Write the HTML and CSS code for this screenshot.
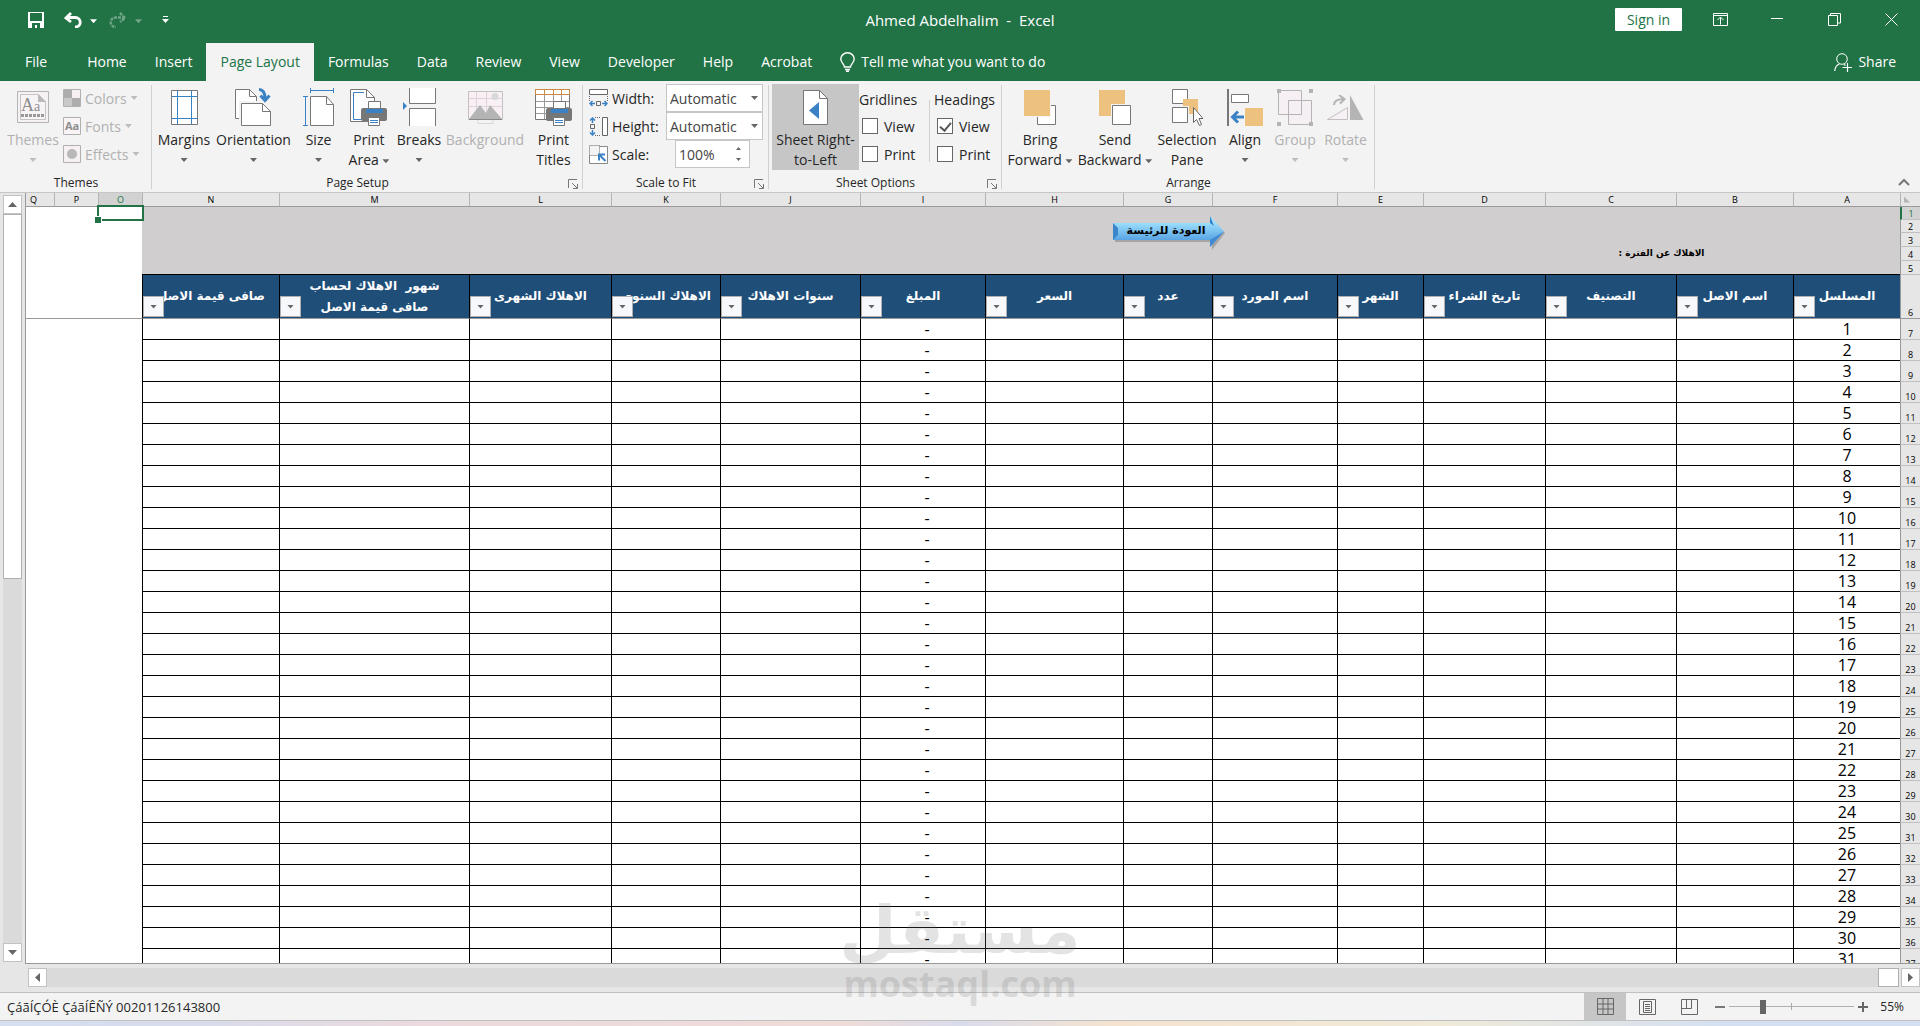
FILE: index.html
```html
<!DOCTYPE html>
<html lang="en">
<head>
    <meta charset="UTF-8">
    <meta name="viewport" content="width=device-width, initial-scale=1.0">
    <title>Ahmed Abdelhalim - Excel</title>
    <link rel="stylesheet" href="styles.css">
</head>
<body>
    <header class="titlebar">
        <div class="quick-access">
            <button class="icon-btn save" aria-label="Save"><svg width="16" height="16" viewBox="0 0 16 16"><path d="M0 0h16v16H0z" fill="#fff"/><path d="M2 1h12v8H2zM4 11h8v5H9v-3H7v3H4z" fill="#217346"/></svg></button>
            <button class="icon-btn" aria-label="Undo"><svg width="18" height="16" viewBox="0 0 18 16"><path d="M7 1L2 6l5 4M2 5.500h9c7 0 7 9.500 0 9.500" fill="none" stroke="#fff" stroke-width="2.800"/></svg></button>
            <button class="icon-btn" aria-label="Undo list"><span class="caret white"></span></button>
            <button class="icon-btn faded redo" aria-label="Redo"><svg width="18" height="16" viewBox="0 0 18 16"><path d="M11 1l5 5-5 4M16 5.500H7c-7 0-7 9.500 0 9.500" fill="none" stroke="#fff" stroke-width="2.500" stroke-dasharray="3 1"/></svg></button>
            <button class="icon-btn faded" aria-label="Redo list"><span class="caret white"></span></button>
            <button class="icon-btn customize" aria-label="Customize toolbar"><svg width="7" height="8" viewBox="0 0 7 8"><path d="M1 0h5v1H1zM0 3h7L3.500 7z" fill="#fff"/></svg></button>
        </div>
        <h1>Ahmed Abdelhalim&nbsp; -&nbsp; Excel</h1>
        <div class="window-controls">
            <button class="sign-in">Sign in</button>
            <button class="win-btn" aria-label="Ribbon display options"><svg width="15" height="13" viewBox="0 0 15 13"><path d="M.5.5h14v12H.5zM.5 2.500h14M7.500 11.500v-7M4.500 7l3-3 3 3" fill="none" stroke="#fff"/></svg></button>
            <button class="win-btn" aria-label="Minimize"><svg width="13" height="13" viewBox="0 0 13 13"><path d="M0 5.500h12" stroke="#fff"/></svg></button>
            <button class="win-btn" aria-label="Restore"><svg width="13" height="13" viewBox="0 0 13 13"><path d="M.5 2.500h9v10h-9zM2.500 2.500v-2h10v9.500h-3" fill="none" stroke="#fff"/></svg></button>
            <button class="win-btn" aria-label="Close"><svg width="13" height="13" viewBox="0 0 13 13"><path d="M.5.5l12 12M12.500.5l-12 12" stroke="#fff"/></svg></button>
        </div>
    </header>

    <nav class="tabs">
        <a href="#" class="file">File</a>
        <a href="#">Home</a>
        <a href="#">Insert</a>
        <a href="#" class="active">Page Layout</a>
        <a href="#">Formulas</a>
        <a href="#">Data</a>
        <a href="#">Review</a>
        <a href="#">View</a>
        <a href="#">Developer</a>
        <a href="#">Help</a>
        <a href="#">Acrobat</a>
        <a href="#" class="tell-me"><svg width="15" height="20" viewBox="0 0 15 20"><path d="M4.500 15c0-3-3.700-4-3.700-8a6.700 6.200 0 0 1 13.400 0c0 4-3.700 5-3.700 8zM5 17.500h5M6 19.300h3" fill="none" stroke="#fff" stroke-width="1.400"/></svg>Tell me what you want to do</a>
        <a href="#" class="share"><svg width="18" height="19" viewBox="0 0 18 19"><circle cx="8" cy="6" r="5.300" fill="none" stroke="#fff"/><path d="M.7 18c.3-4 2-6 4.800-7M10 11.500l1.500 1M8.500 14.500H18M13.500 10v9" fill="none" stroke="#fff" stroke-width="1.200"/></svg>Share</a>
    </nav>

    <section class="ribbon">
        <div class="group themes">
            <div class="group-body">
                <button class="big" disabled>
                    <span class="pic"><svg width="32" height="32" viewBox="0 0 32 32"><path d="M.5.5h31v31H.5z" fill="#f6f2f4" stroke="#b4b4b4"/><path d="M3.500 3.500h18l7 7v18h-25z" fill="#f8f4f6" stroke="#c4c4c4"/><path d="M21 3l8 8h-8z" fill="#bbb"/><text x="4" y="20" font-family="Liberation Serif" font-size="18" fill="#8d8d8d">A</text><text x="17" y="20" font-family="Liberation Serif" font-size="14" fill="#8d8d8d">a</text><path d="M4 24.500h23" stroke="#999" stroke-width="3" stroke-dasharray="3 1"/></svg></span>
                    <span>Themes</span><span class="caret"></span>
                </button>
                <div class="stack">
                    <button class="small" disabled><svg width="18" height="18" viewBox="0 0 18 18"><path d="M.5.5h17v17H.5z" fill="#f6f0f3" stroke="#b0b0b0"/><path d="M1 1h8v8H1zM9 9h8v8H9z" fill="#adadad"/><path d="M1 9h8v8H1z" fill="#c9c9c9"/></svg>Colors<span class="caret"></span></button>
                    <button class="small" disabled><svg width="18" height="18" viewBox="0 0 18 18"><path d="M.5.5h17v17H.5z" fill="#f8f4f6" stroke="#b0b0b0"/><text x="2" y="13" font-family="Open Sans" font-weight="700" font-size="11" fill="#8d8d8d">Aa</text></svg>Fonts<span class="caret"></span></button>
                    <button class="small" disabled><svg width="18" height="18" viewBox="0 0 18 18"><path d="M.5.5h17v17H.5z" fill="#f6f0f3" stroke="#b0b0b0"/><circle cx="9" cy="9" r="5" fill="#b8b8b8"/></svg>Effects<span class="caret"></span></button>
                </div>
            </div>
            <h2>Themes</h2>
        </div>

        <div class="group setup">
            <div class="group-body">
                <button class="big"><span class="pic"><svg width="27" height="35" viewBox="0 0 27 35"><path d="M.5.5h26v34H.5z" fill="#fff" stroke="#777"/><path d="M6.500 1v33M20.500 1v33M1 6.500h25M1 28.500h25" stroke="#3b82c4"/></svg></span><span>Margins</span><span class="caret"></span></button>
                <button class="big"><span class="pic"><svg width="37" height="38" viewBox="0 0 37 38"><path d="M.5 1.500h14l7 7v22H.5z" fill="#fff" stroke="#777"/><path d="M14.500 1.500v7h7" fill="none" stroke="#777"/><path d="M4 13h29v25H4z" fill="#f3f3f3"/><path d="M6.500 15.500h21l8 8v14h-29z" fill="#fff" stroke="#777"/><path d="M27.500 15.500v8h8" fill="none" stroke="#777"/><path d="M24 1.500c4 0 6 3 6 9M25.500 7.500l4.500 5 4.500-5" fill="none" stroke="#3b82c4" stroke-width="3"/></svg></span><span>Orientation</span><span class="caret"></span></button>
                <button class="big"><span class="pic"><svg width="32" height="38" viewBox="0 0 32 38"><path d="M7.500 8.500h16l7 8v21h-23z" fill="#fff" stroke="#777"/><path d="M23.500 8.500v8h7" fill="none" stroke="#777"/><path d="M8 2.500h22M7.500 0v5M30.500 0v5M2.500 8v29M0 8.500h5M0 37.500h5" stroke="#3b82c4"/></svg></span><span>Size</span><span class="caret"></span></button>
                <button class="big"><span class="pic"><svg width="38" height="38" viewBox="0 0 38 38"><path d="M.5 1.500h16l8 8v24H.5z" fill="#fff" stroke="#777"/><path d="M16.500 1.500v8h8" fill="none" stroke="#777"/><path d="M14 4.500H3.500v27H12" fill="none" stroke="#3b82c4"/><path d="M18.500 13.500h12v9h-12z" fill="#fff" stroke="#777"/><path d="M11 22q0-2 2-2h22q2 0 2 2v9q0 2-2 2H13q-2 0-2-2z" fill="#777"/><path d="M16 21h17v4H16z" fill="#3b82c4"/><path d="M18.500 29.500h11v8h-11z" fill="#fff" stroke="#777"/><path d="M20 32.500h8M20 34.500h8" stroke="#3b82c4"/></svg></span><span>Print</span><span>Area <i class="caret"></i></span></button>
                <button class="big"><span class="pic"><svg width="33" height="38" viewBox="0 0 33 38"><path d="M6.500 0v15.500h26V0M6.500 38V20.500h26V38" fill="#fff" stroke="#777"/><path d="M0 14l4 4-4 4z" fill="#3b82c4"/></svg></span><span>Breaks</span><span class="caret"></span></button>
                <button class="big" disabled><span class="pic"><svg width="35" height="33" viewBox="0 0 35 33"><path d="M.5.5h34v28H.5z" fill="#f8f0f4" stroke="#c4c0c2"/><path d="M1 7.500h33M1 15.500h33M8.500 1v28M18.500 1v28M10 29v3.500h15V29" fill="none" stroke="#dcd4d8"/><circle cx="27" cy="5.500" r="3.500" fill="#d8d8d8"/><path d="M1 28l11-14 6 8 4-8 12 14z" fill="#b4b4b4"/><path d="M1 28.500h33" stroke="#888"/></svg></span><span>Background</span></button>
                <button class="big"><span class="pic"><svg width="38" height="38" viewBox="0 0 38 38"><path d="M.5 1.500h34v30H.5z" fill="#fff" stroke="#777"/><path d="M1 13.500h33M1 19.500h33M1 25.500h33M9.500 7v24M18.500 7v24M26.500 7v24" stroke="#999"/><path d="M.5 1.500h34v5H.5zM9.500 1v6M18.500 1v6M26.500 1v6" fill="none" stroke="#d08a45"/><path d="M18.500 13.500h12v9h-12z" fill="#fff" stroke="#777"/><path d="M11 22q0-2 2-2h22q2 0 2 2v9q0 2-2 2H13q-2 0-2-2z" fill="#777"/><path d="M16 21h17v4H16z" fill="#3b82c4"/><path d="M18.500 29.500h11v8h-11z" fill="#fff" stroke="#777"/><path d="M20 32.500h8M20 34.500h8" stroke="#3b82c4"/></svg></span><span>Print</span><span>Titles</span></button>
            </div>
            <h2>Page Setup</h2>
            <button class="launcher" aria-label="Page Setup dialog"><svg width="10" height="10" viewBox="0 0 10 10"><path d="M.5 9V.5H9M4 4l5 5M9.500 5v4.500H5" fill="none" stroke="#777"/></svg></button>
        </div>

        <div class="group scale">
            <div class="group-body">
                <label for="fitWidth"><svg width="19" height="18" viewBox="0 0 19 18"><path d="M.5.5h18v5H.5z" fill="#fff" stroke="#666"/><path d="M.5 7v6M18.500 7v6" stroke="#666" stroke-dasharray="1 1"/><path d="M7.500 12.500h4v4h-4z" fill="none" stroke="#666"/><path d="M1 14.500h5M13 14.500h5M3.500 12L1 14.500 3.500 17M15.500 12l2.500 2.500-2.500 2.500" fill="none" stroke="#3b82c4" stroke-width="1.500"/></svg>Width:</label>
                <select id="fitWidth"><option>Automatic</option></select>
                <label for="fitHeight"><svg width="19" height="19" viewBox="0 0 19 19"><path d="M13.500.5h5v18h-5z" fill="#fff" stroke="#666"/><path d="M6 .5h6M6 18.500h6" stroke="#666" stroke-dasharray="1 1"/><path d="M1.500 7.500h4v4h-4z" fill="none" stroke="#666"/><path d="M3.500 1v5M3.500 13v5M1 3.500L3.500 1 6 3.500M1 15.500L3.500 18 6 15.500" fill="none" stroke="#3b82c4" stroke-width="1.500"/></svg>Height:</label>
                <select id="fitHeight"><option>Automatic</option></select>
                <label for="fitScale"><svg width="19" height="19" viewBox="0 0 19 19"><path d="M10 1.500h8.500v17H.5V10" fill="#fff" stroke="#888"/><path d="M.5.5h10v10H.5z" fill="#f3f3f3" stroke="#666" stroke-dasharray="1 1"/><path d="M10 15.500V9.500h6M10.500 10l6 6" fill="none" stroke="#3b82c4" stroke-width="2"/></svg>Scale:</label>
                <div class="spinner"><input id="fitScale" type="text" value="100%"><span><button class="step up" aria-label="Increase scale"></button><button class="step" aria-label="Decrease scale"></button></span></div>
            </div>
            <h2>Scale to Fit</h2>
            <button class="launcher" aria-label="Scale dialog"><svg width="10" height="10" viewBox="0 0 10 10"><path d="M.5 9V.5H9M4 4l5 5M9.500 5v4.500H5" fill="none" stroke="#777"/></svg></button>
        </div>

        <div class="group options">
            <div class="group-body">
                <button class="big pressed"><span class="pic"><svg width="25" height="35" viewBox="0 0 25 35"><path d="M.5.5h16l8 8v26H.5z" fill="#fff" stroke="#777"/><path d="M16.500.5v8h8" fill="none" stroke="#777"/><path d="M16 12v17l-10-8.500z" fill="#3b82c4"/></svg></span><span>Sheet Right-</span><span>to-Left</span></button>
                <fieldset>
                    <legend>Gridlines</legend>
                    <label><input type="checkbox">View</label>
                    <label><input type="checkbox">Print</label>
                </fieldset>
                <fieldset class="headings">
                    <legend>Headings</legend>
                    <label><input type="checkbox" checked>View</label>
                    <label><input type="checkbox">Print</label>
                </fieldset>
            </div>
            <h2>Sheet Options</h2>
            <button class="launcher" aria-label="Sheet Options dialog"><svg width="10" height="10" viewBox="0 0 10 10"><path d="M.5 9V.5H9M4 4l5 5M9.500 5v4.500H5" fill="none" stroke="#777"/></svg></button>
        </div>

        <div class="group arrange">
            <div class="group-body">
                <button class="big"><span class="pic"><svg width="32" height="35" viewBox="0 0 32 35"><path d="M13.500 15.500h18v19h-18z" fill="#fff" stroke="#777"/><path d="M0 0h27v27H0z" fill="#f3f3f3"/><path d="M0 0h26v26H0z" fill="#ecc27e"/></svg></span><span>Bring</span><span>Forward <i class="caret"></i></span></button>
                <button class="big"><span class="pic"><svg width="32" height="35" viewBox="0 0 32 35"><path d="M0 0h26v26H0z" fill="#ecc27e"/><path d="M12 14h20v21H12z" fill="#f3f3f3"/><path d="M13.500 15.500h18v19h-18z" fill="#fff" stroke="#777"/></svg></span><span>Send</span><span>Backward <i class="caret"></i></span></button>
                <button class="big"><span class="pic"><svg width="31" height="37" viewBox="0 0 31 37"><path d="M.5.5h15v14H.5zM.5 18.500h15v15H.5z" fill="#fff" stroke="#777"/><path d="M11 10h15v15h-9v-8h-6z" fill="#ecc27e"/><path d="M21.500 18.500v15l3-3 3 6 2-1-2.500-6h4z" fill="#fff" stroke="#666"/></svg></span><span>Selection</span><span>Pane</span></button>
                <button class="big"><span class="pic"><svg width="36" height="37" viewBox="0 0 36 37"><path d="M1 0v37" stroke="#777" stroke-width="2"/><path d="M4.500 5.500h17v8h-17z" fill="#fff" stroke="#777"/><path d="M18 19h18v18H18z" fill="#ecc27e"/><path d="M17 28H6M11 22.500L5.500 28l5.500 5.500" fill="none" stroke="#3b82c4" stroke-width="3"/></svg></span><span>Align</span><span class="caret"></span></button>
                <button class="big" disabled><span class="pic"><svg width="36" height="37" viewBox="0 0 36 37"><path d="M1.500 1.500h23v24h-23zM11.500 11.500h23v24h-23z" fill="#f6f0f4" stroke="#b4b4b4"/><path d="M11.500 11.500h13v14h-13z" fill="none" stroke="#b4b4b4"/><path d="M0 0h4v4H0zM32 0h4v4h-4zM0 33h4v4H0zM32 33h4v4h-4z" fill="#b4b4b4"/></svg></span><span>Group</span><span class="caret"></span></button>
                <button class="big" disabled><span class="pic"><svg width="37" height="25" viewBox="0 0 37 25"><path d="M.5 24.500h20v-12z" fill="#f6f0f4" stroke="#c4bfc2"/><path d="M23 0v25h13.500z" fill="#b4b4b4"/><path d="M7 10c0-4 4-6 10-6M12 0l5.500 4-4.500 4.500" fill="none" stroke="#b4b4b4" stroke-width="2"/></svg></span><span>Rotate</span><span class="caret"></span></button>
            </div>
            <h2>Arrange</h2>
        </div>

        <button class="collapse" aria-label="Collapse the ribbon"><svg width="12" height="8" viewBox="0 0 12 8"><path d="M1 7l5-5 5 5" fill="none" stroke="#777" stroke-width="2"/></svg></button>
    </section>

    <main class="workspace">
        <div class="v-scroll">
            <button class="scroll-btn" aria-label="Scroll up"><span class="arrow up"></span></button>
            <div class="track"><div class="thumb"></div></div>
            <button class="scroll-btn" aria-label="Scroll down"><span class="arrow down"></span></button>
        </div>
        <div class="sheet">
            <table dir="rtl">
                <colgroup id="columns"></colgroup>
                <thead id="letters"></thead>
                <tbody id="cells"></tbody>
            </table>
        </div>
    </main>

    <div class="h-scroll">
        <button class="scroll-btn" aria-label="Scroll left"><span class="arrow left"></span></button>
        <div class="track"><div class="thumb"></div></div>
        <button class="scroll-btn" aria-label="Scroll right"><span class="arrow right"></span></button>
    </div>

    <footer class="status">
        <p>ÇáãÍÇÓÈ ÇáãÍÊÑÝ 00201126143800</p>
        <button class="view-btn active" aria-label="Normal view"><svg width="17" height="17" viewBox="0 0 17 17"><path d="M.5.5h16v16H.5zM6 0v17M11 0v17M0 6h17M0 11h17" fill="none" stroke="#666"/></svg></button>
        <button class="view-btn" aria-label="Page layout view"><svg width="17" height="16" viewBox="0 0 17 16"><path d="M.5.5h16v15H.5zM4.500 2.500h8v11h-8zM6 5.500h5M6 7.500h5M6 9.500h5M6 11.500h5" fill="none" stroke="#666"/></svg></button>
        <button class="view-btn" aria-label="Page break view"><svg width="17" height="16" viewBox="0 0 17 16"><path d="M.5.5h16v15H.5zM5.500 1v8.500M.5 9.500h10V1" fill="none" stroke="#666"/></svg></button>
        <button class="zoom-btn" aria-label="Zoom out"><svg width="10" height="10" viewBox="0 0 10 10"><path d="M0 5h10" stroke="#777" stroke-width="2"/></svg></button>
        <input class="zoom" type="range" min="0" max="100" value="26" aria-label="Zoom">
        <button class="zoom-btn" aria-label="Zoom in"><svg width="10" height="10" viewBox="0 0 10 10"><path d="M0 5h10M5 0v10" stroke="#666" stroke-width="2"/></svg></button>
        <span class="percent">55%</span>
    </footer>
    <div class="desktop"></div>

    <div class="watermark">
        <span class="ar" lang="ar">مستقل</span>
        <span class="en">mostaql.com</span>
    </div>

    <script src="script.js"></script>
</body>
</html>
```
FILE: styles.css
```css
/* General */
* { box-sizing: border-box; }
body { display: flex; flex-direction: column; height: 100vh; margin: 0; overflow: hidden; position: relative; background: #e6e6e6; color: #262626; font-family: "Open Sans", "Noto Sans", sans-serif; font-size: 14px; }
button { margin: 0; padding: 0; border: 0; background: none; color: inherit; font: inherit; }
button:disabled { color: #b1b1b1; }
svg { display: block; flex: none; }
h1, h2, p { margin: 0; font-weight: normal; }

/* Down arrows beside the commands */
.caret { display: inline-block; width: 7px; height: 4px; background: #666; clip-path: polygon(0 0, 100% 0, 50% 100%); vertical-align: middle; }
.caret.white { background: #fff; }
button:disabled .caret { background: #bdbdbd; }

/* Title bar */
.titlebar { display: grid; grid-template-columns: 1fr auto 1fr; align-items: center; flex: none; height: 43px; padding: 0 0 4px; background: #217346; color: #fff; }
.titlebar h1 { font-size: 15px; line-height: 18px; }
.quick-access { display: flex; align-items: center; gap: 8px; padding-left: 28px; }
.quick-access .save { margin-right: 12px; }
.quick-access .redo { margin-left: 4px; }
.quick-access .customize { margin-left: 12px; }
.faded { opacity: 0.35; }
.window-controls { display: flex; justify-content: flex-end; align-items: center; }
.sign-in { width: 67px; height: 23px; margin-right: 10px; border-radius: 1px; background: #fff; color: #217346; }
.win-btn { display: flex; justify-content: center; align-items: center; width: 57px; height: 36px; }

/* Ribbon tabs */
.tabs { display: flex; flex: none; height: 38px; background: #217346; line-height: 38px; }
.tabs a { padding: 0 14px; color: #fff; text-decoration: none; }
.tabs .file { padding: 0 26px 0 25px; }
.tabs .active { background: #f3f3f3; color: #217346; }
.tabs .tell-me, .tabs .share { display: flex; align-items: center; gap: 6px; }
.tabs .share { margin-left: auto; padding-right: 24px; }

/* Ribbon */
.ribbon { display: flex; flex: none; height: 112px; background: #f3f3f3; border-bottom: 1px solid #c6c6c6; }
.group { display: grid; grid-template-columns: 1fr auto; grid-template-rows: 89px 1fr; position: relative; padding: 3px 3px 1px; }
.group::after { content: ""; position: absolute; right: 0; top: 4px; bottom: 3px; width: 1px; background: #d0d0d0; }
.group-body { grid-column: 1 / 3; display: grid; align-items: start; align-content: start; }
.group h2 { grid-area: 2 / 1 / 3 / 3; padding: 1px 20px 0 0; font-size: 12px; line-height: 18px; text-align: center; }
.themes h2, .arrange h2 { padding-right: 0; }
.launcher { grid-area: 2 / 2; align-self: center; padding: 2px 2px 0 0; }
.big { display: flex; flex-direction: column; align-items: center; height: 86px; line-height: 20px; white-space: nowrap; }
.big .pic { display: flex; justify-content: center; align-items: center; height: 46px; flex: none; }
.big > .caret { margin-top: 8px; }
.big.pressed { background: #c6c6c6; }
.stack { display: flex; flex-direction: column; }
.small { display: flex; align-items: center; gap: 4px; height: 28px; }

.themes .group-body { grid-template-columns: 60px 1fr; width: 146px; }
.setup .group-body { grid-template-columns: 58px 81px 49px 52px 48px 84px 53px; }
.scale .group-body { grid-template-columns: 77px 97px; padding: 0 3px; }
.options .group-body { grid-template-columns: 87px 70px 70px; }
.arrange .group-body { grid-template-columns: 70px 80px 64px 52px 48px 53px; }

/* Scale to Fit */
.scale label { display: flex; align-items: center; gap: 4px; height: 28px; }
.scale select { width: 97px; height: 28px; padding: 0 0 0 3px; border: 1px solid #c6c6c6; border-radius: 0; appearance: none; background: #fff url("data:image/svg+xml,%3Csvg xmlns='http://www.w3.org/2000/svg' width='7' height='4'%3E%3Cpath d='M0 0h7L3.500 4z' fill='%23666'/%3E%3C/svg%3E") no-repeat right 4px center; color: #444; font: inherit; }
.spinner { display: flex; width: 75px; height: 28px; margin-left: 9px; border: 1px solid #c6c6c6; background: #fff; }
.spinner input { width: 54px; padding: 0 0 0 3px; border: 0; background: none; color: #444; font: inherit; }
.spinner span { display: flex; flex-direction: column; justify-content: space-around; flex: 1; padding: 2px 0; }
.step { width: 5px; height: 3px; margin-left: 6px; background: #666; clip-path: polygon(0 0, 100% 0, 50% 100%); }
.step.up { clip-path: polygon(50% 0, 100% 100%, 0 100%); }

/* Sheet Options */
fieldset { min-width: 0; margin: 4px 0 0; padding: 0 0 0 3px; border: 0; }
fieldset.headings { height: 74px; border-left: 1px solid #d0d0d0; padding-left: 7px; }
legend { padding: 0; margin-left: -3px; line-height: 24px; }
fieldset label { display: flex; align-items: center; gap: 6px; height: 28px; }
fieldset input { display: grid; place-content: center; width: 16px; height: 16px; margin: 0; border: 1px solid #666; appearance: none; background: #fff; }
fieldset input:checked::before { content: ""; width: 5px; height: 9px; margin-top: -2px; border: solid #555; border-width: 0 2px 2px 0; transform: rotate(40deg); }
.collapse { align-self: flex-end; margin-left: auto; padding: 0 10px 6px 0; }

/* Worksheet */
.workspace { display: flex; flex: 1; min-height: 0; }
.v-scroll { display: flex; flex-direction: column; flex: none; width: 25px; padding: 2px 3px 2px; }
.track { flex: 1; background: #dadada; }
.thumb { border: 1px solid #b0b0b0; background: #fff; }
.v-scroll .thumb { height: 50%; }
.scroll-btn { display: flex; justify-content: center; align-items: center; flex: none; width: 19px; height: 19px; border: 1px solid #c2c2c2; background: #fff; }
.arrow { width: 9px; height: 5px; background: #666; }
.arrow.up { clip-path: polygon(50% 0, 100% 100%, 0 100%); }
.arrow.down { clip-path: polygon(0 0, 100% 0, 50% 100%); }
.arrow.left, .arrow.right { width: 5px; height: 9px; }
.arrow.left { clip-path: polygon(100% 0, 100% 100%, 0 50%); }
.arrow.right { clip-path: polygon(0 0, 100% 50%, 0 100%); }

.sheet { flex: 1; min-width: 0; overflow: hidden; border: solid #999; border-width: 0 0 1px 1px; }
table { width: 100%; border-collapse: separate; border-spacing: 0; table-layout: fixed; }
td, th { height: 21px; padding: 0; overflow: hidden; background: #fff; text-align: center; font-weight: normal; white-space: nowrap; }
thead th { height: 14px; background: #e6e6e6; border-left: 1px solid #b4b4b4; border-bottom: 1px solid #999; color: #000; font-size: 9px; line-height: 13px; }
thead th:last-child { padding-left: 4px; border-left: 0; text-align: left; }
tbody th { background: #e6e6e6; border-left: 1px solid #999; border-bottom: 1px solid #c0c0c0; color: #000; font-size: 9px; line-height: 10px; vertical-align: bottom; }
.corner { width: 6px; height: 6px; margin-right: 10px; background: #b4b4b4; clip-path: polygon(0 0, 100% 100%, 0 100%); }
th.selected { background: #d2d2d2; color: #217346; }
tbody th.selected { border-left: 2px solid #217346; }

.band { background: #d0cece; overflow: visible; }
.row-1 > *, .row-2 > * { height: 13px; }
.row-3 > *, .row-4 > *, .row-5 > * { height: 14px; }
.row-5 .band { border-bottom: 1px solid #000; }
.period { color: #000; font-family: "DejaVu Sans", sans-serif; font-size: 9px; font-weight: bold; line-height: 12px; vertical-align: top; }
.row-6 > * { height: 44px; border-bottom: 1px solid #999; }
.row-6 .head { position: relative; background: #1f4e78; border-left: 1px solid #000; color: #fff; font-family: "DejaVu Sans", sans-serif; font-size: 12px; font-weight: bold; line-height: 21px; white-space: pre; }
.filter { display: flex; justify-content: center; align-items: center; position: absolute; left: 0; bottom: 1px; width: 21px; height: 21px; border: 1px solid #b0b0b0; background: #f6f8fb; }
.cell { border-left: 1px solid #000; border-bottom: 1px solid #000; color: #000; line-height: 20px; }
.serial { font-size: 16px; }
.amount { padding-left: 8px; font-size: 16px; }

/* Active cell */
.active-cell { position: relative; overflow: visible; }
.active-cell::before { content: ""; position: absolute; z-index: 1; inset: -2px -2px -1px -1px; border: 2px solid #217346; }
.active-cell::after { content: ""; position: absolute; z-index: 1; left: -3px; bottom: -3px; width: 6px; height: 6px; border: solid #fff; border-width: 1px 1px 0 0; background: #217346; }

/* Arrow shape that links back to the main sheet */
.anchor { position: relative; }
.home-link { position: absolute; left: -10px; top: -5px; z-index: 1; width: 112px; height: 32px; color: #000; text-decoration: none; }
.home-link svg { position: absolute; left: 0; top: 0; }
.home-link span { position: relative; display: block; padding-right: 6px; font-family: "DejaVu Sans", sans-serif; font-size: 11px; font-weight: bold; line-height: 32px; }

/* Horizontal scroll bar */
.h-scroll { display: flex; flex: none; height: 28px; padding: 4px 0 5px 28px; }
.h-scroll .track { display: flex; justify-content: flex-end; margin-right: 2px; }
.h-scroll .thumb { width: 21px; }

/* Status bar */
.status { display: flex; align-items: center; flex: none; height: 29px; padding-right: 16px; border: solid #c0c0c0; border-width: 1px 0; background: #f3f3f3; font-size: 12px; }
.status p { flex: 1; padding-left: 7px; font-size: 13px; line-height: 16px; }
.view-btn { display: flex; justify-content: center; align-items: center; width: 42px; height: 27px; }
.view-btn.active { background: #c6c6c6; }
.zoom-btn { margin-left: 4px; }
.view-btn + .zoom-btn { margin-left: 5px; }
.zoom { width: 125px; height: 14px; margin: 0 0 0 4px; appearance: none; background: linear-gradient(#aaa, #aaa) center / 1px 7px no-repeat, linear-gradient(#b0b0b0, #b0b0b0) center / 100% 1px no-repeat; }
.zoom::-webkit-slider-thumb { appearance: none; width: 6px; height: 14px; background: #666; }
.percent { width: 36px; text-align: right; }
.desktop { flex: none; height: 5px; background: linear-gradient(90deg, #d5dff0, #d8dcec 10%, #ecdade 22%, #efdcd8 44%, #dadcec 50%, #f5e3cf 58%, #f0ead8 75%, #d4e0f2 90%); }

/* Watermark */
.watermark { position: absolute; left: 0; right: 0; bottom: 20px; z-index: 2; display: flex; flex-direction: column; align-items: center; color: #777; opacity: 0.2; font-weight: bold; pointer-events: none; }
.watermark .ar { font-family: "DejaVu Sans", sans-serif; font-size: 66px; line-height: 62px; }
.watermark .en { font-family: "Open Sans", sans-serif; font-size: 36px; line-height: 44px; }
```
FILE: script.js
```js
const LAST_ROW = 37;

// Column widths in pixels; the last column takes whatever is left
const columns = [
    { letter: 'A', width: 107, title: 'المسلسل' },
    { letter: 'B', width: 117, title: 'اسم الاصل' },
    { letter: 'C', width: 131, title: 'التصنيف' },
    { letter: 'D', width: 122, title: 'تاريخ الشراء' },
    { letter: 'E', width: 86, title: 'الشهر' },
    { letter: 'F', width: 125, title: 'اسم المورد' },
    { letter: 'G', width: 89, title: 'عدد' },
    { letter: 'H', width: 138, title: 'السعر' },
    { letter: 'I', width: 125, title: 'المبلغ' },
    { letter: 'J', width: 140, title: 'سنوات الاهلاك' },
    { letter: 'K', width: 109, title: 'الاهلاك السنوى' },
    { letter: 'L', width: 142, title: 'الاهلاك الشهرى' },
    { letter: 'M', width: 190, title: 'شهور  الاهلاك لحساب\nصافى قيمة الاصل' },
    { letter: 'N', width: 137, title: 'صافى قيمة الاصل' },
    { letter: 'O', width: 44 },
    { letter: 'P', width: 44 },
    { letter: 'Q' }
];

const homeLink = `
    <a class="home-link" href="#">
        <svg width="114" height="36" viewBox="0 0 114 36">
            <defs><linearGradient id="blue" x2="0" y2="1"><stop offset="0.2" stop-color="#9fe0fd"/><stop offset="0.8" stop-color="#55a2e2"/></linearGradient></defs>
            <path d="M2 11h97V4l13 14L99 35v-8H2z" fill="#000" opacity="0.2"/>
            <path d="M0 8h97V1l14 15.500L97 32v-7H0z" fill="url(#blue)"/>
            <path d="M0 8l5 5v7l-5 5z" fill="#3b86c8"/>
            <path d="M97 1v7l4 3z" fill="#2f7fc4"/>
            <path d="M97 32v-7l14-8.500z" fill="#3f8ad0"/>
        </svg>
        <span>العودة للرئيسة</span>
    </a>`;

// Rows 1-5: the grey band above the table
function bandCells(row) {
    if (row === 4) {
        return '<td class="band period" colspan="4">الاهلاك عن الفترة :</td><td class="band" colspan="10"></td>';
    }
    if (row === 2) {
        return `<td class="band" colspan="6"></td><td class="band anchor">${homeLink}</td><td class="band" colspan="7"></td>`;
    }
    return '<td class="band" colspan="14"></td>';
}

// Row 6: titles with filter buttons
function headCells() {
    return columns.filter(c => c.title).map(c =>
        `<td class="head">${c.title}<button class="filter" aria-label="Filter ${c.letter}"><span class="caret"></span></button></td>`
    ).join('');
}

function dataCells(row) {
    return columns.filter(c => c.title).map(c => {
        if (c.letter === 'A') return `<td class="cell serial">${row - 6}</td>`;
        if (c.letter === 'I') return '<td class="cell amount">-</td>';
        return '<td class="cell"></td>';
    }).join('');
}

document.getElementById('columns').innerHTML = '<col style="width:20px">' +
    columns.map(c => c.width ? `<col style="width:${c.width}px">` : '<col>').join('');

document.getElementById('letters').innerHTML = '<tr><th><div class="corner"></div></th>' +
    columns.map(c => `<th${c.letter === 'O' ? ' class="selected"' : ''}>${c.letter}</th>`).join('') + '</tr>';

let html = '';
for (let row = 1; row <= LAST_ROW; row++) {
    const cells = row < 6 ? bandCells(row) : row === 6 ? headCells() : dataCells(row);
    html += `<tr class="row-${row}"><th${row === 1 ? ' class="selected"' : ''}>${row}</th>${cells}` +
        `<td${row === 1 ? ' class="active-cell"' : ''}></td><td></td><td></td></tr>`;
}
document.getElementById('cells').innerHTML = html;
```
